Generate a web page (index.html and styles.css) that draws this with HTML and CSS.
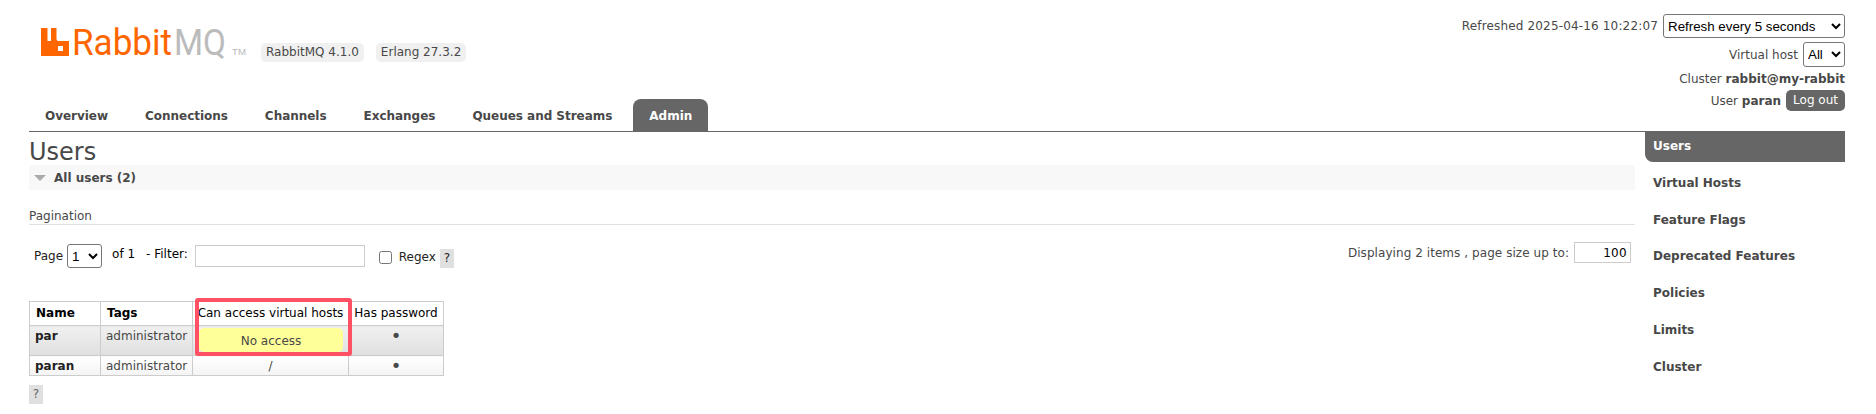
FILE: index.html
```html
<!DOCTYPE html>
<html>
  <head>
    <title>RabbitMQ Management</title>
    <link rel="stylesheet" href="styles.css">
  </head>
  <body>
    <div class="top">
      <div class="top-left">
        <div class="brand">
          <svg class="logo" width="206" height="44" viewBox="0 0 206 44">
            <path class="logo-mark" d="M0 8H6.5V21H10V8H15.5V19Q15.5 21 17.5 21H28V36H0ZM17 26V31H22V26Z" fill-rule="evenodd"/>
            <text class="logo-rabbit" x="31" y="35" textLength="100" lengthAdjust="spacingAndGlyphs">Rabbit</text>
            <text class="logo-mq" x="133" y="35" textLength="52" lengthAdjust="spacingAndGlyphs">MQ</text>
            <text class="logo-tm" x="191" y="35" textLength="14" lengthAdjust="spacingAndGlyphs">TM</text>
          </svg>
          <span class="version">RabbitMQ 4.1.0</span>
          <span class="version">Erlang 27.3.2</span>
        </div>
        <ul class="tabs">
          <li>Overview</li>
          <li>Connections</li>
          <li>Channels</li>
          <li>Exchanges</li>
          <li>Queues and Streams</li>
          <li class="selected">Admin</li>
        </ul>
      </div>
      <div class="status">
        <div class="status-row refresh-row">
          <span class="refreshed">Refreshed 2025-04-16 10:22:07</span>
          <select class="refresh-select"><option>Refresh every 5 seconds</option></select>
        </div>
        <div class="status-row vhost-row">
          <span>Virtual host</span>
          <select class="vhost-select"><option>All</option></select>
        </div>
        <div class="status-row cluster-row"><span>Cluster <b>rabbit@my-rabbit</b></span></div>
        <div class="status-row user-row"><span>User <b>paran</b></span><span class="logout">Log out</span></div>
      </div>
    </div>

    <div class="content">
      <div class="main">
        <h1>Users</h1>
        <div class="section-head"><span class="arrow"></span>All users (2)</div>
        <h3 class="pagination-title">Pagination</h3>
        <div class="pagination">
          <div class="pagination-left">
            <span class="page-label">Page</span>
            <select class="page-select"><option>1</option></select>
            <span class="of">of 1</span>
            <span class="filter-label">- Filter:</span>
            <input class="filter" type="text">
            <input class="regex-box" type="checkbox">
            <span class="regex-label">Regex</span>
            <span class="help">?</span>
          </div>
          <div class="pagination-right">
            <span class="displaying">Displaying 2 items , page size up to:</span>
            <input class="page-size" type="text" value="100">
          </div>
        </div>

        <div class="table-wrap">
          <table class="list">
            <thead>
              <tr>
                <th class="col-name">Name</th>
                <th class="col-tags">Tags</th>
                <th class="col-vhosts">Can access virtual hosts</th>
                <th class="col-pass">Has password</th>
              </tr>
            </thead>
            <tbody>
              <tr class="alt1">
                <td><b>par</b></td>
                <td>administrator</td>
                <td class="warning-cell"><div class="warning">No access</div></td>
                <td class="c"><span class="dot">&#8226;</span></td>
              </tr>
              <tr class="alt2">
                <td><b>paran</b></td>
                <td>administrator</td>
                <td class="c">/</td>
                <td class="c"><span class="dot">&#8226;</span></td>
              </tr>
            </tbody>
          </table>
          <div class="highlight"></div>
        </div>
        <div class="foot-help"><span class="help">?</span></div>
      </div>

      <ul class="side">
        <li class="selected">Users</li>
        <li>Virtual Hosts</li>
        <li>Feature Flags</li>
        <li>Deprecated Features</li>
        <li>Policies</li>
        <li>Limits</li>
        <li>Cluster</li>
      </ul>
    </div>
  </body>
</html>
```

FILE: styles.css
```css
* { margin: 0; padding: 0; box-sizing: border-box; }
html, body { height: 100%; overflow: hidden; }
body {
  font-family: "DejaVu Sans", Verdana, sans-serif;
  font-size: 12px;
  color: #484848;
  background: #fff;
  padding: 0 31px 0 29px;
}
ul { list-style: none; }
select {
  font-family: "Liberation Sans", Arial, sans-serif;
  font-size: 13.33px;
  color: #000;
  background: #fff;
  border: 1px solid #767676;
  border-radius: 3px;
}

.top {
  display: flex;
  justify-content: space-between;
  height: 132px;
  border-bottom: 1px solid #666;
}
.top-left {
  display: flex;
  flex-direction: column;
  justify-content: space-between;
}
.brand {
  display: flex;
  align-items: flex-start;
  padding: 20px 0 0 12px;
}
.logo { display: block; flex: none; margin-right: 14px; }
.logo-mark { fill: #ff6600; }
.logo-rabbit, .logo-mq { font-family: Roboto, "Liberation Sans", sans-serif; font-weight: 400; font-size: 37px; }
.logo-rabbit { fill: #ff6600; }
.logo-mq { fill: #bbb; }
.logo-tm { font-family: "Liberation Sans", sans-serif; font-size: 9px; fill: #bbb; }
.version {
  margin: 23px 12px 0 0;
  height: 19px;
  line-height: 19px;
  padding: 0 5px;
  background: #f0f0f0;
  border-radius: 5px;
}

.tabs { display: flex; gap: 5px; }
.tabs li {
  height: 32px;
  line-height: 35px;
  padding: 0 16px;
  font-weight: bold;
  letter-spacing: -0.03px;
}
.tabs li.selected {
  background: #666;
  color: #fff;
  border-radius: 8px 8px 0 0;
}

.status { padding-top: 14px; text-align: right; }
.status-row { display: flex; justify-content: flex-end; align-items: center; white-space: nowrap; }
.refresh-row { height: 24px; gap: 5px; }
.refreshed { letter-spacing: 0.16px; }
.refresh-select { width: 182px; height: 24px; }
.vhost-row { height: 25px; gap: 5px; margin-top: 4px; }
.vhost-select { width: 42px; height: 25px; }
.cluster-row { height: 14px; margin-top: 5px; }
.user-row { margin-top: 4px; }
.logout {
  margin-left: 5px;
  padding: 0 7px;
  height: 21px;
  line-height: 21px;
  color: #fff;
  background: #666;
  border-radius: 5px;
}

.content { display: flex; justify-content: space-between; }
.main { width: 1606px; }
h1 {
  height: 33px;
  font-size: 24px;
  font-weight: normal;
  line-height: 41px;
}
.section-head {
  height: 25px;
  line-height: 26px;
  padding-left: 25px;
  position: relative;
  background: #f8f8f8;
  font-weight: bold;
  font-size: 12px;
}
.arrow {
  position: absolute;
  left: 5px;
  top: 10px;
  border-left: 6px solid transparent;
  border-right: 6px solid transparent;
  border-top: 6px solid #aaa;
}
.pagination-title {
  margin-top: 17px;
  height: 18px;
  font-size: 12px;
  line-height: 18px;
  font-weight: normal;
  border-bottom: 1px solid #e0e0e0;
}
.pagination {
  display: flex;
  justify-content: space-between;
  padding: 18px 4px 0 5px;
}
.pagination-left { display: flex; align-items: flex-start; color: #000; }
.page-label { margin-top: 6px; color: #222; }
.page-select { width: 35px; height: 24px; margin: 1px 0 0 4px; }
.of { margin: 4px 0 0 10px; }
.filter-label { margin: 4px 0 0 11px; }
.filter { width: 170px; height: 22px; margin: 2px 0 0 7px; border: 1px solid #ccc; }
.regex-box { width: 13px; height: 13px; margin: 8px 0 0 14px; }
.regex-label { margin: 7px 0 0 7px; color: #222; }
.help {
  display: inline-block;
  width: 14px;
  height: 19px;
  line-height: 19px;
  text-align: center;
  background: #e0e0e0;
  color: #666;
}
.pagination-left .help { margin: 6px 0 0 4px; color: #222; }
.pagination-right { display: flex; align-items: center; gap: 5px; height: 21px; margin-top: -1px; }
.displaying { letter-spacing: 0.06px; }
.page-size {
  width: 57px;
  height: 21px;
  padding-right: 3px;
  font-family: "DejaVu Sans", sans-serif;
  font-size: 12px;
  letter-spacing: 0.3px;
  text-align: right;
  color: #000;
  border: 1px solid #ccc;
}

.table-wrap { position: relative; display: inline-block; margin-top: 33px; vertical-align: top; }
.list { border-collapse: collapse; table-layout: fixed; width: 415px; }
.list th, .list td { border: 1px solid #ccc; padding: 0 5px; vertical-align: top; }
.list th { height: 24px; line-height: 23px; color: #000; font-weight: normal; background: #fff; text-align: center; white-space: nowrap; padding: 0; }
.list th.col-name, .list th.col-tags { font-weight: bold; text-align: left; padding-left: 6px; }
.col-name { width: 71px; }
.col-tags { width: 92px; }
.col-vhosts { width: 156px; }
.col-pass { width: 95px; }
.list td { line-height: 20px; white-space: nowrap; }
.list td b { color: #222; }
.alt1 td { height: 30px; background: linear-gradient(#f0f0f0, #e0e0e0); }
.list .alt2 td { height: 20px; padding-top: 1px; line-height: 18px; background: linear-gradient(#fff, #f4f4f4); }
.c { text-align: center; }
.dot { font-size: 18px; line-height: 0; vertical-align: -2px; }
.list td.warning-cell { padding: 2px 5px 0 6px; }
.warning {
  height: 24px;
  line-height: 26px;
  text-align: center;
  background: #ffff99;
  border-radius: 5px;
}
.highlight {
  position: absolute;
  left: 166px;
  top: -3px;
  width: 157px;
  height: 58px;
  border: 4px solid #ff5064;
  border-radius: 3px;
}
.foot-help { margin-top: 9px; }

.side { width: 200px; }
.side li {
  height: 31px;
  line-height: 30px;
  margin-bottom: 5.8px;
  padding-left: 8px;
  font-weight: bold;
}
.side li.selected {
  height: 30px;
  line-height: 28px;
  background: #666;
  color: #fff;
  border-radius: 0 0 0 8px;
}
```
